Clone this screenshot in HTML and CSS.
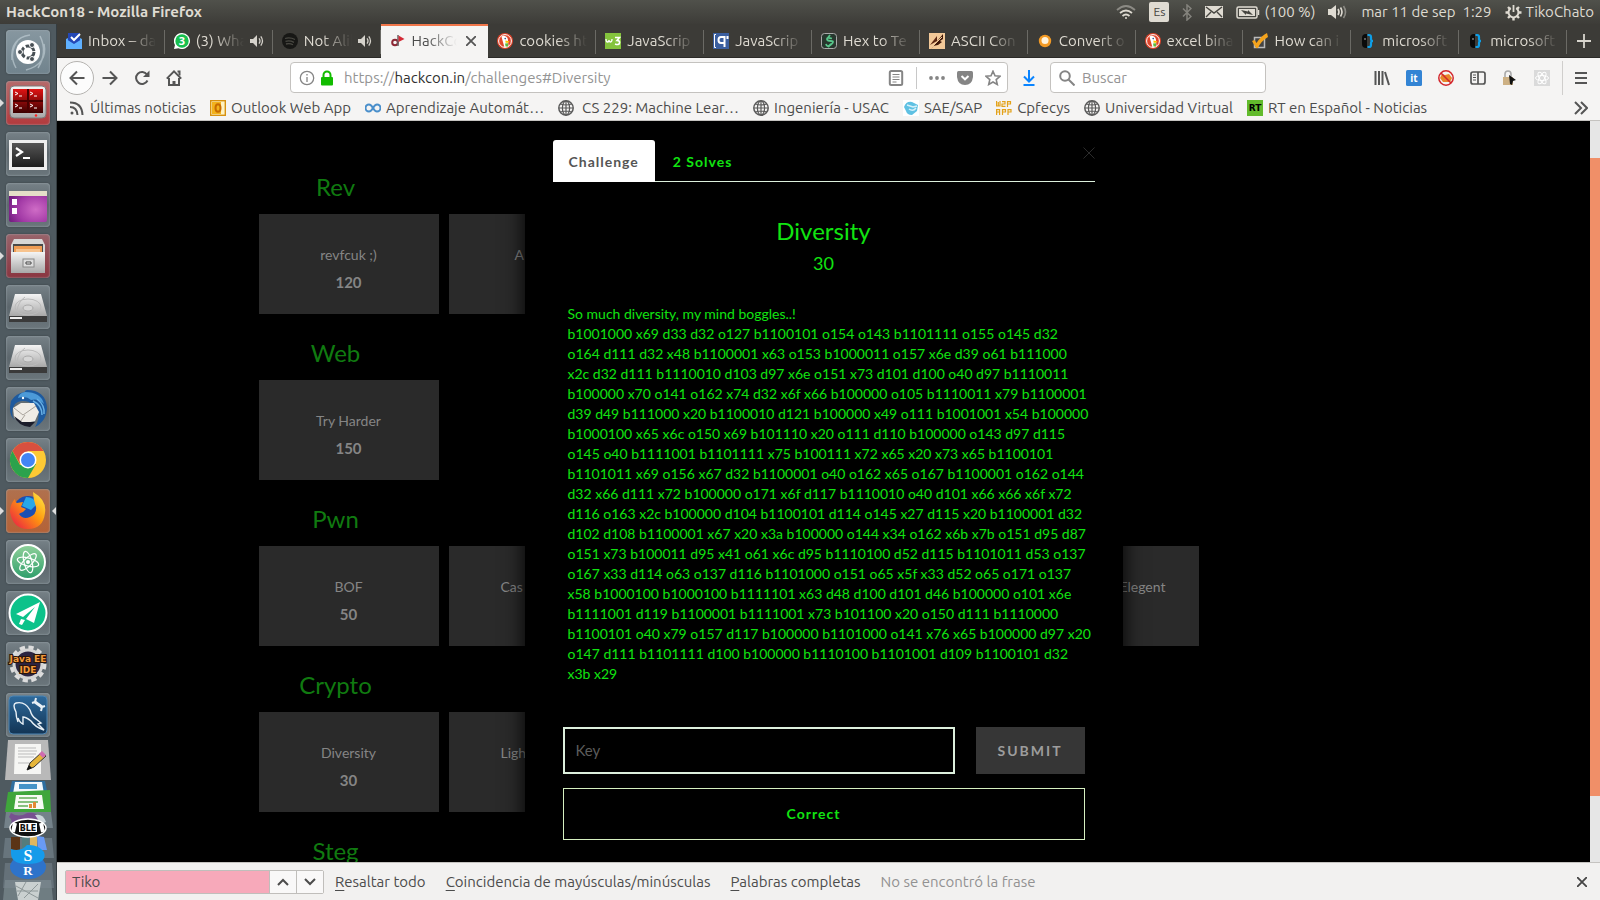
FILE: index.html
```html
<!DOCTYPE html>
<html lang="es">
<head>
<meta charset="utf-8">
<title>HackCon18 - Mozilla Firefox</title>
<link rel="stylesheet" href="styles.css">
</head>
<body>
<svg class="defs" aria-hidden="true">
  <defs>
    <linearGradient id="metal" x1="0" y1="0" x2="0" y2="1"><stop offset="0" stop-color="#f4f4f4"/><stop offset="1" stop-color="#a8a8a8"/></linearGradient>
    <radialGradient id="purple" cx=".7" cy=".6" r=".8"><stop offset="0" stop-color="#cf6cc6"/><stop offset=".6" stop-color="#a23aa6"/><stop offset="1" stop-color="#6d1a7c"/></radialGradient>
    <linearGradient id="dark" x1="0" y1="0" x2="0" y2="1"><stop offset="0" stop-color="#555"/><stop offset="1" stop-color="#1e1e1e"/></linearGradient>
    <linearGradient id="red" x1="0" y1="0" x2="0" y2="1"><stop offset="0" stop-color="#e01313"/><stop offset="1" stop-color="#3a0000"/></linearGradient>
    <linearGradient id="flame" x1="1" y1="0" x2="0" y2="1"><stop offset="0" stop-color="#fff04a"/><stop offset=".45" stop-color="#ff980e"/><stop offset="1" stop-color="#e8114b"/></linearGradient>
    <linearGradient id="green" x1="0" y1="0" x2="0" y2="1"><stop offset="0" stop-color="#8fd19a"/><stop offset="1" stop-color="#2f9e6b"/></linearGradient>
    <linearGradient id="navy" x1="0" y1="0" x2="0" y2="1"><stop offset="0" stop-color="#2e6a9c"/><stop offset="1" stop-color="#123454"/></linearGradient>
    <symbol id="globe" viewBox="0 0 16 16"><g fill="none" stroke="#5a5a5a" stroke-width="1.200"><circle cx="8" cy="8" r="7.200" stroke-width="1.500"/><ellipse cx="8" cy="8" rx="3.600" ry="7"/><path d="M8 1v14M1 8h14M2.500 4q5.500 2 11 0M2.500 12q5.500-2 11 0"/></g></symbol>
    <symbol id="duck" viewBox="0 0 16 16"><circle cx="8" cy="8" r="8" fill="#e0452b"/><circle cx="8" cy="8" r="6.400" fill="none" stroke="#fff" stroke-width="1"/><path d="M4.500 3.400c2.400-1.400 6 0 6.400 3l.6 7.200-4 1L5.400 7z" fill="#fff"/><path d="M8.400 7.600l4 .6-1 1.600H8.600z" fill="#fdc300"/><path d="M8 10.600l3-.4v3.400H8.600z" fill="#5cba3c"/><circle cx="8.200" cy="5.600" r=".8" fill="#2a4e8a"/></symbol>
    <symbol id="speaker" viewBox="0 0 14 14"><path d="M0 5h3l4-4v12L3 9H0z" fill="#d5d2cb"/><path d="M9 4.400q2 2.600 0 5.200M10.800 2.400q3.400 4.600 0 9.200" fill="none" stroke="#d5d2cb" stroke-width="1.300"/></symbol>
    <symbol id="brace" viewBox="0 0 16 16"><path d="M6 1Q2 1 2 5v6q0 4 4 4h1V1z" fill="#0a0a0a"/><circle cx="5" cy="6" r="1" fill="#777"/><path d="M7.500 2H9q2 0 2 2v2q0 2 2 2-2 0-2 2v2q0 2-2 2H7.500" fill="none" stroke="#0e9fe8" stroke-width="2.200"/></symbol>
    <symbol id="drive" viewBox="0 0 44 44"><path d="M9 9h26l6 22H3z" fill="url(#metal)"/><path d="M3 31h38v6H3z" fill="#3a3a3a"/><path d="M4 32h12v2H4z" fill="#eee"/><ellipse cx="22" cy="22" rx="13" ry="8" fill="none" stroke="#bbb"/><ellipse cx="22" cy="23" rx="5" ry="3" fill="#d6d6d6" stroke="#aaa"/><path d="M19 12q-7 5-8 14" fill="none" stroke="#bbb"/></symbol>
  </defs>
</svg>

<header class="panel">
  <span class="panel-title">HackCon18 - Mozilla Firefox</span>
  <div class="indicators">
    <svg width="20" height="16" viewBox="0 0 20 16" fill="none" stroke="#dfdbd2" stroke-width="1.800"><path d="M1 6q9-8 18 0" stroke="#8b8a84"/><path d="M4 9q6-5 12 0M6.500 12q3.500-3 7 0"/><circle cx="10" cy="14" r="1" fill="#dfdbd2" stroke="none"/></svg>
    <span class="lang">Es</span>
    <svg width="10" height="17" viewBox="0 0 10 17" fill="none" stroke="#84837d" stroke-width="1.500"><path d="M1 4.500l8 8-4 3.500V1l4 3.500-8 8"/></svg>
    <svg width="18" height="12" viewBox="0 0 18 12"><path d="M0 0h18v12H0z" fill="#dfdbd2"/><path d="M1 1l8 6 8-6M1 11l5-5M17 11l-5-5" fill="none" stroke="#45443f" stroke-width="1.400"/></svg>
    <span class="battery"><svg width="24" height="13" viewBox="0 0 24 13"><rect x="1" y="1" width="20" height="11" rx="1.500" fill="none" stroke="#dfdbd2" stroke-width="1.500"/><rect x="3" y="3" width="16" height="7" fill="#dfdbd2"/><path d="M22.500 4v5" stroke="#dfdbd2" stroke-width="1.500"/><path d="M5 4l7 1.500V4l5 5-7-1.500V9z" fill="#45443f"/></svg>(100 %)</span>
    <svg width="20" height="14" viewBox="0 0 20 14"><path d="M0 4h3l5-4v14L3 10H0z" fill="#dfdbd2"/><path d="M10 4q2 3 0 6M12.500 2.500q3 4.500 0 9" fill="none" stroke="#dfdbd2" stroke-width="1.600"/><path d="M15.500 1q4 6 0 12" fill="none" stroke="#8b8a84" stroke-width="1.600"/></svg>
    <span class="clock">mar 11 de sep&nbsp; 1:29</span>
    <span class="session"><svg width="17" height="17" viewBox="0 0 17 17" fill="none" stroke="#dfdbd2"><path d="M5.800 4.200a5 5 0 1 0 5.400 0" stroke-width="2"/><path d="M8.500 1v7" stroke-width="1.800"/><path d="M3 3l2 2M14 3l-2 2M.500 8.500h3M13.500 8.500h3M3 14l2-2M14 14l-2-2M8.500 13.500v3" stroke-width="2.400"/></svg>TikoChato</span>
  </div>
</header>

<div class="desktop">
  <nav class="dock" aria-label="Lanzador">
    <button class="tile tile-pale" aria-label="Ubuntu"><svg viewBox="0 0 44 44"><path d="M6 30Q4 8 24 5M38 14q4 20-18 26M10 38Q2 24 12 10M34 6q8 16-2 32" stroke="#c7d4da" stroke-width="1.500" fill="none" opacity=".6"/><circle cx="22" cy="22" r="12" fill="#fff"/><circle cx="22" cy="22" r="6" fill="none" stroke="#474f54" stroke-width="3" stroke-dasharray="10.600 2"/><g fill="#474f54" stroke="#fff"><circle cx="14" cy="22" r="2.500"/><circle cx="26" cy="15" r="2.500"/><circle cx="26" cy="29" r="2.500"/></g></svg></button>
    <button class="tile tile-red runs" aria-label="Terminator"><svg viewBox="0 0 44 44"><rect x="4" y="5" width="36" height="32" rx="4" fill="url(#metal)" stroke="#7a7a7a"/><rect x="7" y="8" width="30" height="24" fill="url(#red)"/><path d="M22 8v24M7 20h30" stroke="#4a0000" stroke-width="2"/><path d="M9 11l3 1.500L9 14M13 15h3M24 11l3 1.500-3 1.500M28 15h3M9 23l3 1.500L9 26M13 27h3M24 23l3 1.500-3 1.500M28 27h3" stroke="#fff" fill="none"/><circle cx="30" cy="34.500" r="1.200" fill="#f22"/></svg></button>
    <button class="tile" aria-label="Terminal"><svg viewBox="0 0 44 44"><rect x="3" y="8" width="38" height="30" fill="#eee"/><rect x="6" y="11" width="32" height="24" fill="url(#dark)"/><path d="M10 16l6 4-6 4M17 26h7" stroke="#fff" stroke-width="2.200" fill="none"/></svg></button>
    <button class="tile" aria-label="Escritorio"><svg viewBox="0 0 44 44"><rect x="3" y="8" width="38" height="31" rx="2" fill="url(#purple)"/><path d="M3 8h38v5H3z" fill="#e5dfc8"/><path d="M6 16h5v6H6zM6 25h5v6H6z" fill="#fff"/></svg></button>
    <button class="tile tile-wine runs" aria-label="Archivos"><svg viewBox="0 0 44 44"><path d="M8 5h28l3 6v9H5v-9z" fill="#d7d7d7"/><path d="M7 10h30v10H7z" fill="#4a4a4a"/><path d="M8 12h28v8H8z" fill="#ee9c55"/><path d="M10 15h24v5H10z" fill="#f7c38e"/><path d="M5 18h34v21H5z" fill="url(#metal)"/><rect x="17" y="25" width="11" height="8" fill="#ddd" stroke="#888"/><path d="M20 28h5v2h-5z" fill="#fff" stroke="#444"/></svg></button>
    <button class="tile" aria-label="Disco 1"><svg><use href="#drive"/></svg></button>
    <button class="tile" aria-label="Disco 2"><svg><use href="#drive"/></svg></button>
    <button class="tile" aria-label="Thunderbird"><svg viewBox="0 0 44 44"><path d="M5 14Q10 6 19 5q-1-1 2-2 18 0 20 17 0 14-12 20 5-8 3-16l-9-9q-9-3-14 2-5 7-1 16-6-7-3-19z" fill="#1e5a9e"/><path d="M19 5q16 0 19 12-6-6-13-4-5-5-13-2 1-5 7-6z" fill="#4c9ad8"/><path d="M27 14q9 4 9 14M31 12q8 6 7 15" stroke="#67b0e6" stroke-width="1.500" fill="none"/><path d="M7 21l8-5 13 0 5 9-4 9-14 3-7-7z" fill="#efece6"/><path d="M8 21l9 7 13-9M14 35l5-7" stroke="#a9a49c" fill="none"/><path d="M8 29l8 6 13 0-5 5q-12-1-16-11z" fill="#1b1d2b"/><circle cx="17" cy="11" r="1.200" fill="#fff"/></svg></button>
    <button class="tile" aria-label="Chrome"><svg viewBox="0 0 44 44"><circle cx="22" cy="22" r="18" fill="#fcc934"/><path d="M6.400 13A18 18 0 0 1 37.600 13H22L14 26z" fill="#d8503f"/><path d="M6.400 13A18 18 0 0 0 22 40l8-14-16 1z" fill="#2ba24c"/><circle cx="22" cy="22" r="8.500" fill="#fff"/><circle cx="22" cy="22" r="7" fill="#4285f4"/></svg></button>
    <button class="tile tile-orange runs active" aria-label="Firefox"><svg viewBox="0 0 44 44"><circle cx="22" cy="22" r="15" fill="#1b4fb4"/><path d="M20 8q8 0 11 7l-6 6-9-4z" fill="#28a7e8"/><path d="M27 3q14 8 12 21-2 16-17 16T4 23q0-8 5-13 0 3 2 4l6-1-2 5 5 2-3 3q-3 1-4 2 4 6 11 3 7-3 6-10-3-8-3-15z" fill="url(#flame)"/></svg></button>
    <button class="tile" aria-label="Atom"><svg viewBox="0 0 44 44"><circle cx="22" cy="22" r="17" fill="url(#green)" stroke="#fff" stroke-width="2"/><g fill="none" stroke="#fff" stroke-width="1.200"><ellipse cx="22" cy="22" rx="11" ry="4" transform="rotate(15 22 22)"/><ellipse cx="22" cy="22" rx="11" ry="4" transform="rotate(75 22 22)"/><ellipse cx="22" cy="22" rx="11" ry="4" transform="rotate(135 22 22)"/></g><circle cx="22" cy="22" r="2" fill="#fff"/></svg></button>
    <button class="tile" aria-label="Mensajería"><svg viewBox="0 0 44 44"><circle cx="22" cy="22" r="18.500" fill="#0cc28a" stroke="#fff" stroke-width="2"/><path d="M34 11L10 23l7 3 12-10-9 12 8 4zM15 28l4 1-3 5-3-1z" fill="#fff"/></svg></button>
    <button class="tile" aria-label="Java EE IDE"><svg viewBox="0 0 44 44"><circle cx="22" cy="22" r="16" fill="none" stroke="#ddd" stroke-width="5" stroke-dasharray="5 3.370"/><circle cx="22" cy="22" r="14" fill="#2c2440" stroke="#d5d5d5" stroke-width="3"/><text x="22" y="20" class="java">Java EE</text><text x="22" y="31" class="java">IDE</text></svg></button>
    <button class="tile" aria-label="MySQL Workbench"><svg viewBox="0 0 44 44"><rect x="3" y="3" width="38" height="38" rx="4" fill="url(#navy)" stroke="#4d86b5"/><path d="M12 29q-2-5-2-10-4-8 0-9 9-2 14 7 2 7 6 9l5 4-3 1 6 6q-9-3-13-9-5-4-8-4l0 7q-3-1-5-6" fill="none" stroke="#e8f0f6" stroke-width="1.400"/><path d="M29 9l7 5" stroke="#e8f0f6" stroke-width="3"/><path d="M30 5l-1 4-3 1M35 18l1-4 3-1" stroke="#e8f0f6" stroke-width="2" fill="none"/></svg></button>
    <div class="pile"><svg viewBox="0 0 57 160" aria-label="Más aplicaciones">
      <path d="M8 0h40l3 40H5z" fill="#b9b9b9"/><path d="M15 4h26v30H14z" fill="#f6f6f4"/><path d="M18 8h18M18 11h19M18 14h18M18 17h16M18 23h12" stroke="#bbb"/><path d="M27 30l3-7 12-11 4 4-12 11z" fill="#e6b53a" stroke="#333"/><path d="M39 14l3-3 4 4-3 3z" fill="#cf6bb0"/><path d="M27 30l2-5 3 3z" fill="#111"/>
      <path d="M12 41h33l3 15H9z" fill="#2f6e9f"/><path d="M15 42h27l2 12H13z" fill="#f2f7fb"/><path d="M19 44h18v5H19z" fill="#4593c8"/>
      <path d="M8 52l42-2 1 22H5z" fill="#3fa63b"/><path d="M16 55h26l2 14H14z" fill="#f7faf4"/><path d="M19 58h18M18 62h20M18 66h10" stroke="#87c07f" stroke-width="2"/><path d="M29 68v-4h3v4m1 0v-6h3v6" fill="#e28a35"/>
      <path d="M6 72h45l2 16H4z" fill="#74828a"/><path d="M11 73q8 5 16 0 10-1 13 5l-3 8H10q4-5-1-9z" fill="#775090"/><path d="M35 75q8-2 11 7l-5 2z" fill="#cbd5da"/>
      <path d="M5 98h47l2 20H3z" fill="#68757d"/><path d="M11 97h9v14h-9z" fill="#5b3416"/><path d="M22 96h7v12h-7z" fill="#557c7d"/><path d="M30 97h7v14h-7z" fill="#dfb75f"/><path d="M37 96l7 1 3 13h-9z" fill="#699af5"/>
      <ellipse cx="28" cy="88" rx="18" ry="9" fill="#111" stroke="#fff" stroke-width="1.500"/><path d="M15 83l-2 9M41 83l2 9" stroke="#fff" stroke-width="4"/><rect x="19" y="83" width="18" height="9" fill="#fff"/><text x="28" y="91" class="ble">BLE</text>
      <path d="M5 123h47l2 25H3z" fill="#657179"/><ellipse cx="28" cy="127" rx="18" ry="12" fill="#2e73ca"/><text x="28" y="135" class="pile-letter pile-small">R</text><path d="M11 109q10 3 16-4 11-1 17 7 4 12-17 12-16 0-16-11z" fill="#159bea"/><text x="28" y="121" class="pile-letter">S</text>
      <path d="M5 140h46l2 20H3z" fill="#7d8b92" opacity=".7"/><path d="M15 142h26l-3 18H18z" fill="#c9d0d0"/><path d="M16 146l22 12M26 142l-8 14M38 144l-14 14M17 151h21" stroke="#8e9899"/>
    </svg></div>
  </nav>

  <div class="browser">
    <div class="tabs" role="tablist">
      <button class="tab" role="tab"><svg viewBox="0 0 16 16"><path d="M0 6l8-4 8 4v9H0z" fill="#5aa7f8"/><path d="M2 0h12v8l-6 4-6-4z" fill="#2447b5"/><path d="M5 4l3 3 6-6" stroke="#fff" stroke-width="2" fill="none"/><path d="M0 6l8 5 8-5v10H0z" fill="#5fb0ff"/></svg><span class="tab-label">Inbox – da</span></button>
      <button class="tab" role="tab"><svg viewBox="0 0 16 16"><path d="M8 0a8 8 0 1 1-3.500 15.200L0 16l1-4A8 8 0 0 1 8 0z" fill="#fff"/><circle cx="8" cy="8" r="6.700" fill="#17bf4f"/><text x="8" y="12" class="wa">3</text></svg><span class="tab-label">(3) Wha</span><svg class="audio"><use href="#speaker"/></svg></button>
      <button class="tab" role="tab"><svg viewBox="0 0 16 16"><circle cx="8" cy="8" r="8" fill="#171715"/><path d="M3 5.500q5-1.500 10 1M3.500 8.300q4.500-1 8.500 1M4 11q4-1 7 .8" stroke="#4a4943" stroke-width="1.300" fill="none"/></svg><span class="tab-label">Not Alik</span><svg class="audio"><use href="#speaker"/></svg></button>
      <button class="tab current" role="tab" aria-selected="true"><svg viewBox="0 0 16 16"><circle cx="5" cy="9.500" r="2.800" fill="none" stroke="#8c2734" stroke-width="2"/><path d="M8 2v11" stroke="#666" stroke-width="1.500"/><path d="M8.500 2.500l6 3.500-6 3z" fill="#d42a36"/></svg><span class="tab-label">HackCo</span><svg class="close" viewBox="0 0 10 10"><path d="M0 0l10 10M10 0L0 10" stroke="#555" stroke-width="1.800"/></svg></button>
      <button class="tab" role="tab"><svg><use href="#duck"/></svg><span class="tab-label">cookies ht</span></button>
      <button class="tab" role="tab"><svg viewBox="0 0 16 16"><path d="M0 0h16v16H0z" fill="#84c33d"/><path d="M1 6q0 3 1.500 3T4 7q0 2 1.500 2T7 6" stroke="#fff" fill="none" stroke-width="1.300"/><path d="M10 4.500h4.500L12 7.500q3 0 2.500 2.500T10 11" stroke="#fff" stroke-width="1.600" fill="none"/></svg><span class="tab-label">JavaScrip</span></button>
      <button class="tab" role="tab"><svg viewBox="0 0 16 16"><path d="M0 0h16v16H0z" fill="#3b5fa0"/><path d="M3 1.500H1.500v13H3" stroke="#fff" fill="none"/><path d="M11.500 4H8q-2.500 0-2.500 3t2.500 3h3.500M11.500 3v11M14.500 3v3" stroke="#fff" stroke-width="2" fill="none"/></svg><span class="tab-label">JavaScrip</span></button>
      <button class="tab" role="tab"><svg viewBox="0 0 16 16"><rect x=".5" y=".5" width="15" height="15" rx="3" fill="#27372e" stroke="#aaa"/><path d="M11 5.500Q6 4 6 6t4 2 0 3.500-5-.5M6 6l3-4M10 11l-3 3" stroke="#58c68a" stroke-width="1.800" fill="none"/></svg><span class="tab-label">Hex to Te</span></button>
      <button class="tab" role="tab"><svg viewBox="0 0 16 16"><path d="M0 0h16v16H0z" fill="#f3c998"/><path d="M2 16L14 1v5l-3 2 2 1-4 3-5 1z" fill="#3f1708"/><path d="M1 12L8 3v5z" fill="#5b2612"/><path d="M2 15L13 4" stroke="#f3c998"/></svg><span class="tab-label">ASCII Con</span></button>
      <button class="tab" role="tab"><svg viewBox="0 0 16 16"><circle cx="8" cy="8" r="6.200" fill="#f39a25"/><circle cx="8" cy="7.500" r="3.500" fill="#fff3dd"/></svg><span class="tab-label">Convert o</span></button>
      <button class="tab" role="tab"><svg><use href="#duck"/></svg><span class="tab-label">excel bina</span></button>
      <button class="tab" role="tab"><svg viewBox="0 0 16 16"><rect x="2.500" y="4.500" width="10" height="10" fill="#444" stroke="#bbb" stroke-width="1.500"/><path d="M0 8l2.500-1 2 3Q9 3 15 0l1 4Q9 8 6 15H4z" fill="#f4a31c"/></svg><span class="tab-label">How can i</span></button>
      <button class="tab" role="tab"><svg><use href="#brace"/></svg><span class="tab-label">microsoft</span></button>
      <button class="tab" role="tab"><svg><use href="#brace"/></svg><span class="tab-label">microsoft</span></button>
      <button class="new-tab" aria-label="Nueva pestaña"><svg width="14" height="14" viewBox="0 0 14 14"><path d="M7 0v14M0 7h14" stroke="#d8d5cd" stroke-width="1.800"/></svg></button>
    </div>

    <div class="toolbar">
      <button class="back" aria-label="Atrás"><svg viewBox="0 0 16 16"><path d="M15.500 8H1.500M8 1.500L1.500 8 8 14.500"/></svg></button>
      <button class="tool" aria-label="Adelante"><svg viewBox="0 0 16 16"><path d="M.500 8h14M8 1.500L14.500 8 8 14.500"/></svg></button>
      <button class="tool" aria-label="Recargar"><svg viewBox="0 0 16 16"><path d="M13.500 10.500A6 6 0 1 1 13 4.500"/><path d="M15.500.5v6.500H9z" fill="#555" stroke="none"/></svg></button>
      <button class="tool" aria-label="Inicio"><svg viewBox="0 0 16 16"><path d="M.8 8.600L8 1.400l7.200 7.200M3 8v7h10V8"/><path d="M8 15v-4" stroke-width="3"/><path d="M11.500 1.500h2v4"/></svg></button>
      <div class="address">
        <svg viewBox="0 0 16 16"><g stroke-width="1.300"><circle cx="8" cy="8" r="6.700"/><path d="M8 7v5M8 4v1.500"/></g></svg>
        <svg viewBox="0 0 16 16"><path d="M4.500 8V5a3.500 3.500 0 0 1 7 0v3" stroke="#12bc00" stroke-width="2"/><rect x="2" y="7" width="12" height="8.500" rx="1" fill="#12bc00" stroke="none"/></svg>
        <div class="url" role="textbox" aria-label="Dirección" contenteditable="true">https://<b>hackcon.in</b>/challenges#Diversity</div>
        <svg class="grey" viewBox="0 0 16 16"><rect x="1.800" y="1" width="12.400" height="14" rx="1.500"/><path d="M4.500 4.500h7M4.500 7h7M4.500 9.500h7M4.500 12h4" stroke-width="1.200"/></svg>
        <i class="rule"></i>
        <svg class="grey" viewBox="0 0 16 16"><g fill="#858585" stroke="none"><circle cx="2" cy="8" r="1.900"/><circle cx="8" cy="8" r="1.900"/><circle cx="14" cy="8" r="1.900"/></g></svg>
        <svg viewBox="0 0 16 16"><path d="M0 2.500Q0 1 1.500 1h13Q16 1 16 2.500V7q-1 8-8 8T0 7z" fill="#858585" stroke="none"/><path d="M4.500 6L8 9.300 11.500 6" stroke="#fff" stroke-width="2"/></svg>
        <svg class="grey" viewBox="0 0 16 16"><path d="M8 1.200l2 4.600 5 .5-3.800 3.300 1.100 4.900L8 12l-4.300 2.500 1.100-4.900L1 6.300l5-.5z" stroke-width="1.600"/></svg>
      </div>
      <button class="tool download" aria-label="Descargas"><svg viewBox="0 0 16 16"><path d="M8 0v11M3 6.500l5 5 5-5M2.500 15h11" stroke="#0a84ff"/></svg></button>
      <div class="search"><svg class="grey" viewBox="0 0 16 16"><circle cx="6" cy="6" r="4.800"/><path d="M9.500 9.500l6 6"/></svg><input type="text" placeholder="Buscar" aria-label="Buscar"></div>
      <div class="extras">
        <button class="tool" aria-label="Catálogo"><svg viewBox="0 0 16 16"><path d="M1.500 1v14M5 1v14M8.500 1v14M11 2l4 13"/></svg></button>
        <button class="tool" aria-label="it"><svg viewBox="0 0 16 16"><rect width="16" height="16" rx="1.500" fill="#3384d4" stroke="none"/><text x="8" y="12" class="it">it</text></svg></button>
        <button class="tool" aria-label="Bloqueador"><svg viewBox="0 0 16 16"><path d="M2 8l2-4 3 1 4-1 3 4-2 4H5z" fill="#e8862b" stroke="none"/><circle cx="8" cy="8" r="7.200" stroke="#d3262c" stroke-width="1.500"/><path d="M3 3l10 10" stroke="#d3262c" stroke-width="1.500"/></svg></button>
        <button class="tool" aria-label="Barra lateral"><svg viewBox="0 0 16 16"><rect x="1" y="2" width="14" height="12" rx="2" stroke-width="1.700"/><path d="M8 2v12" stroke-width="1.700"/><path d="M3 5h3M3 7.500h3M3 10h3" stroke-width="1"/></svg></button>
        <button class="tool" aria-label="Candado"><svg viewBox="0 0 16 16"><path d="M3 7V4a3 3 0 0 1 6 0v3" stroke="#aaa" stroke-width="1.600"/><rect x="1" y="7" width="10" height="8" fill="#cdb083" stroke="none"/><path d="M7 5l7 5-3 1-1 4-2-1z" fill="#111" stroke="none"/></svg></button>
        <button class="tool" aria-label="React"><svg viewBox="0 0 16 16"><rect width="16" height="16" fill="#dadada" stroke="none"/><g stroke="#fff" stroke-width="1"><ellipse cx="8" cy="8" rx="6.500" ry="2.500"/><ellipse cx="8" cy="8" rx="6.500" ry="2.500" transform="rotate(60 8 8)"/><ellipse cx="8" cy="8" rx="6.500" ry="2.500" transform="rotate(120 8 8)"/></g></svg></button>
      </div>
      <button class="menu" aria-label="Menú"><svg viewBox="0 0 16 16"><path d="M2 3h12M2 8h12M2 13h12"/></svg></button>
    </div>

    <nav class="bookmarks" aria-label="Marcadores">
      <a href="#"><svg viewBox="0 0 16 16" fill="none" stroke="#555" stroke-width="2"><circle cx="3" cy="13" r="1.500" fill="#555" stroke="none"/><path d="M1 7q7 0 7.500 8M1 2.500q12 0 12.500 12.500"/></svg>Últimas noticias</a>
      <a href="#"><svg viewBox="0 0 16 16"><rect x=".7" y=".7" width="14.600" height="14.600" fill="#fff3c4" stroke="#d79110" stroke-width="1.400"/><path d="M2 2h9v12H2z" fill="#f2b21c"/><ellipse cx="8" cy="8" rx="2.500" ry="3.800" fill="none" stroke="#c86c00" stroke-width="2"/></svg>Outlook Web App</a>
      <a href="#"><svg viewBox="0 0 16 16"><path d="M8 8Q6 4.500 4 4.500a3.500 3.500 0 0 0 0 7Q6 11.500 8 8t4-3.500a3.500 3.500 0 0 1 0 7Q10 11.500 8 8z" fill="none" stroke="#4a8fcb" stroke-width="2"/></svg>Aprendizaje Automát…</a>
      <a href="#" class="spaced"><svg><use href="#globe"/></svg>CS 229: Machine Lear…</a>
      <a href="#"><svg><use href="#globe"/></svg>Ingeniería - USAC</a>
      <a href="#"><svg viewBox="0 0 16 16"><path d="M0 0h16v16H0z" fill="#fff"/><path d="M1 7q2-6 8-5l6 3-1 6-5 4q-5 0-6-4z" fill="#5fc1e3"/><path d="M4 5l6 2 4-1M6 9q4 3 7-1" stroke="#d6f1fa" stroke-width="1.500" fill="none"/></svg>SAE/SAP</a>
      <a href="#"><svg viewBox="0 0 16 16" fill="none" stroke="#e3a21a" stroke-width="1.200"><path d="M.6 1v5h1.700V2v4H4V1M6 1.600h3V4H6v2.400h3.500M11.500 7V1.600h3V4h-3M.6 15V9.600h3V15M.6 12h3M6.500 15V9.600h3V12h-3M12 15V9.600h3V12h-3"/></svg>Cpfecys</a>
      <a href="#"><svg><use href="#globe"/></svg>Universidad Virtual</a>
      <a href="#"><svg viewBox="0 0 16 16"><path d="M0 0h16v16H0z" fill="#62bb2c"/><text x="8" y="11" class="rt">RT</text></svg>RT en Español - Noticias</a>
      <button class="overflow" aria-label="Más marcadores"><svg viewBox="0 0 14 14"><path d="M1 1l6 6-6 6M7 1l6 6-6 6" fill="none" stroke="#555" stroke-width="2"/></svg></button>
    </nav>

    <div class="viewport">
      <main class="page">
        <div class="board">
          <section class="category"><h3>Rev</h3><div class="cards">
            <button class="card"><span>revfcuk ;)</span><b>120</b></button>
            <button class="card cut cut-short"><span>A</span></button>
          </div></section>
          <section class="category"><h3>Web</h3><div class="cards">
            <button class="card"><span>Try Harder</span><b>150</b></button>
          </div></section>
          <section class="category"><h3>Pwn</h3><div class="cards">
            <button class="card"><span>BOF</span><b>50</b></button>
            <button class="card cut"><span>Cas</span></button>
            <button class="card end"><span>Elegent</span></button>
          </div></section>
          <section class="category"><h3>Crypto</h3><div class="cards">
            <button class="card"><span>Diversity</span><b>30</b></button>
            <button class="card cut"><span>Ligh</span></button>
          </div></section>
          <section class="category"><h3>Steg</h3></section>
        </div>
        <div class="overlay">
          <div class="modal" role="dialog" aria-labelledby="challenge-name">
            <button class="dismiss" aria-label="Cerrar"><svg viewBox="0 0 12 12"><path d="M.5.5l11 11M11.500.5l-11 11" stroke="#2c2c2c"/></svg></button>
            <div class="modal-tabs">
              <a href="#challenge" class="on">Challenge</a>
              <a href="#solves">2 Solves</a>
            </div>
            <h2 id="challenge-name">Diversity</h2>
            <p class="points">30</p>
            <p class="cipher">So much diversity, my mind boggles..!
b1001000 x69 d33 d32 o127 b1100101 o154 o143 b1101111 o155 o145 d32
o164 d111 d32 x48 b1100001 x63 o153 b1000011 o157 x6e d39 o61 b111000
x2c d32 d111 b1110010 d103 d97 x6e o151 x73 d101 d100 o40 d97 b1110011
b100000 x70 o141 o162 x74 d32 x6f x66 b100000 o105 b1110011 x79 b1100001
d39 d49 b111000 x20 b1100010 d121 b100000 x49 o111 b1001001 x54 b100000
b1000100 x65 x6c o150 x69 b101110 x20 o111 d110 b100000 o143 d97 d115
o145 o40 b1111001 b1101111 x75 b100111 x72 x65 x20 x73 x65 b1100101
b1101011 x69 o156 x67 d32 b1100001 o40 o162 x65 o167 b1100001 o162 o144
d32 x66 d111 x72 b100000 o171 x6f d117 b1110010 o40 d101 x66 x66 x6f x72
d116 o163 x2c b100000 d104 b1100101 d114 o145 x27 d115 x20 b1100001 d32
d102 d108 b1100001 x67 x20 x3a b100000 o144 x34 o162 x6b x7b o151 d95 d87
o151 x73 b100011 d95 x41 o61 x6c d95 b1110100 d52 d115 b1101011 d53 o137
o167 x33 d114 o63 o137 d116 b1101000 o151 o65 x5f x33 d52 o65 o171 o137
x58 b1000100 b1000100 b1111101 x63 d48 d100 d101 d46 b100000 o101 x6e
b1111001 d119 b1100001 b1111001 x73 b101100 x20 o150 d111 b1110000
b1100101 o40 x79 o157 d117 b100000 b1101000 o141 x76 x65 b100000 d97 x20
o147 d111 b1101111 d100 b100000 b1110100 b1101001 d109 b1100101 d32
x3b x29</p>
            <form class="answer">
              <input type="text" placeholder="Key" aria-label="Key">
              <button type="button">SUBMIT</button>
            </form>
            <div class="result" role="status">Correct</div>
          </div>
        </div>
      </main>
      <div class="scrollbar"><div class="thumb"></div></div>
    </div>

    <div class="findbar">
      <div class="find-group">
        <input type="text" value="Tiko" aria-label="Buscar en la página">
        <button aria-label="Anterior"><svg viewBox="0 0 12 8"><path d="M1 7l5-5 5 5"/></svg></button>
        <button aria-label="Siguiente"><svg viewBox="0 0 12 8"><path d="M1 1l5 5 5-5"/></svg></button>
      </div>
      <button class="option"><u>R</u>esaltar todo</button>
      <button class="option"><u>C</u>oincidencia de mayúsculas/minúsculas</button>
      <button class="option"><u>P</u>alabras completas</button>
      <span class="not-found">No se encontró la frase</span>
      <button class="find-close" aria-label="Cerrar barra"><svg viewBox="0 0 10 10"><path d="M0 0l10 10M10 0L0 10" stroke="#444" stroke-width="1.800"/></svg></button>
    </div>
  </div>
</div>
</body>
</html>
```
FILE: styles.css
```css
* { box-sizing: border-box; }
body {
  margin: 0;
  height: 100vh;
  display: flex;
  flex-direction: column;
  overflow: hidden;
  background: #000;
  font: 15px/20px Ubuntu, "Open Sans", sans-serif;
  color: #4c4c4c;
}
button, input { font: inherit; color: inherit; }
button { background: none; border: 0; padding: 0; margin: 0; }
a { color: inherit; text-decoration: none; }
svg { display: block; flex: none; }
.defs { width: 0; height: 0; position: absolute; }

/* top panel */
.panel {
  flex: none;
  height: 24px;
  display: flex;
  align-items: center;
  justify-content: space-between;
  padding: 0 6px;
  background: linear-gradient(#50514b, #3d3c38);
  color: #dfdbd2;
}
.panel-title { font-weight: bold; }
.indicators { display: flex; align-items: center; gap: 13px; }
.lang {
  width: 20px;
  height: 20px;
  border-radius: 2px;
  background: #dfdbd2;
  color: #45443f;
  font-size: 12px;
  text-align: center;
}
.battery, .session { display: flex; align-items: center; gap: 4px; }

.desktop { flex: 1; min-height: 0; display: flex; }

/* launcher */
.dock {
  flex: none;
  width: 57px;
  padding-top: 6px;
  display: flex;
  flex-direction: column;
  align-items: center;
  gap: 7px;
  overflow: hidden;
  background: #4f5a60;
  border-right: 1px solid #343c40;
}
.tile {
  position: relative;
  flex: none;
  width: 44px;
  height: 44px;
  border-radius: 4px;
  background: linear-gradient(#768187, #5c666c 50%, #6b767c);
  box-shadow: inset 0 0 2px #a5b0b5, 0 0 2px #363d41;
}
.tile svg { width: 44px; height: 44px; }
.tile-pale { background: linear-gradient(#8797a0, #71838d); }
.tile-red { background: linear-gradient(#b56a6a, #b33a3d); }
.tile-wine { background: linear-gradient(#98646b, #8a3540); }
.tile-orange { background: linear-gradient(#b0714e, #b46237); }
.runs::before, .active::after {
  content: "";
  position: absolute;
  top: 18px;
  border: 4px solid transparent;
}
.runs::before { left: -6px; border-left-color: #ddd; border-right: 0; }
.active::after { right: -6px; border-right-color: #ddd; border-left: 0; }
.java { font: bold 9px "DejaVu Sans", sans-serif; fill: #f29a3b; stroke: #2a1408; stroke-width: 2px; paint-order: stroke; text-anchor: middle; }
.pile { width: 57px; height: 160px; flex: none; margin-top: -4px; }
.pile svg { width: 57px; height: 160px; }
.ble { font: bold 8px "DejaVu Sans", sans-serif; text-anchor: middle; fill: #111; }
.pile-letter { font: bold 16px "Liberation Serif", serif; fill: #fff; text-anchor: middle; }
.pile-small { font-size: 13px; }

.browser { flex: 1; min-width: 0; display: flex; flex-direction: column; background: #f2f1f0; }

/* tab strip */
.tabs { flex: none; height: 34px; display: flex; background: #3c3b37; border-bottom: 1px solid #2b2a27; color: #dfdbd2; }
.tab {
  position: relative;
  flex: 1;
  min-width: 0;
  display: flex;
  align-items: center;
  gap: 6px;
  padding: 0 9px;
  text-align: left;
}
.tab svg { width: 16px; height: 16px; }
.tab svg.audio { width: 14px; height: 14px; }
.tab svg.close { width: 10px; height: 10px; margin: 0 3px; }
.tab::after { content: ""; position: absolute; right: 0; top: 6px; bottom: 3px; width: 1px; background: #6b6a65; }
.tab-label {
  flex: 1;
  min-width: 0;
  overflow: hidden;
  white-space: nowrap;
  -webkit-mask-image: linear-gradient(to left, transparent, #000 30px);
  mask-image: linear-gradient(to left, transparent, #000 30px);
}
.current { background: #f5f4f3; color: #4c4c4c; border-top: 2px solid #f0764a; margin-bottom: -1px; padding-bottom: 2px; }
.current::after { display: none; }
.new-tab { width: 33px; display: flex; align-items: center; justify-content: center; }

/* navigation toolbar */
.toolbar { flex: none; height: 39px; display: flex; align-items: center; padding: 0 11px 0 3px; background: #f5f4f3; }
.toolbar svg { width: 16px; height: 16px; fill: none; stroke: #555; stroke-width: 2; }
.toolbar svg.grey { stroke: #858585; }
.back { width: 34px; height: 34px; border: 1px solid #b5b3b0; border-radius: 50%; background: #fcfcfc; display: flex; align-items: center; justify-content: center; }
.tool { width: 32px; height: 32px; display: flex; align-items: center; justify-content: center; }
.address {
  flex: 1;
  height: 31px;
  margin-left: 100px;
  padding: 0 6px 0 8px;
  display: flex;
  align-items: center;
  gap: 12px;
  background: #fff;
  border: 1px solid #c4c2bf;
  border-radius: 4px;
}
.address svg:first-child { margin-right: -8px; stroke: #858585; }
.url { flex: 1; margin-left: -3px; color: #949494; white-space: nowrap; }
.url b { font-weight: normal; color: #303030; }
.rule { width: 1px; height: 22px; background: #c8c8c8; }
.download { width: 42px; }
.search { width: 216px; height: 31px; padding: 0 8px; display: flex; align-items: center; gap: 7px; background: #fff; border: 1px solid #c4c2bf; border-radius: 4px; }
.search input { flex: 1; min-width: 0; border: 0; padding: 0; outline: 0; background: none; }
.search input::placeholder { color: #949494; opacity: 1; }
.extras { margin-left: 100px; display: flex; }
.menu { margin-left: 4px; height: 34px; padding-left: 10px; border-left: 1px solid #d0cecc; }
.it { font: bold 10px "Open Sans", sans-serif; fill: #fff; stroke: none; text-anchor: middle; }
.wa { font: bold 11px "Open Sans", sans-serif; fill: #fff; text-anchor: middle; }

/* bookmarks */
.bookmarks { flex: none; height: 24px; display: flex; align-items: center; gap: 14px; padding: 0 12px 2px; background: #f5f4f3; border-bottom: 1px solid #c5c3c0; white-space: nowrap; }
.bookmarks a { display: flex; align-items: center; gap: 5px; }
.bookmarks a.spaced { gap: 8px; }
.bookmarks a svg { width: 16px; height: 16px; }
.overflow { margin-left: auto; }
.overflow svg { width: 14px; height: 14px; }
.rt { font: bold 9px "DejaVu Sans", sans-serif; text-anchor: middle; fill: #000; }

/* web page */
.viewport { flex: 1; min-height: 0; display: flex; }
.page { position: relative; flex: 1; overflow: hidden; background: #000; font-family: Lato, sans-serif; font-size: 14px; }
.board { max-width: 1130px; margin: 0 auto; padding-top: 27px; }
.category { height: 166px; }
.category h3 { width: 154px; margin: 0; padding: 24px 0 12px; font-size: 24px; line-height: 30px; font-weight: normal; text-align: center; color: #107a10; }
.cards { display: flex; gap: 10px; }
.card { width: 180px; height: 100px; background: #2a2a2a; color: #858585; display: flex; flex-direction: column; align-items: center; gap: 7px; padding-top: 31px; }
.card b { font-size: 15px; }
.card.cut { align-items: flex-start; padding-left: 52px; }
.card.cut-short { padding-left: 66px; }
.card.end { align-items: flex-end; padding-right: 33px; margin-left: 380px; }
.overlay { position: absolute; inset: 0; display: flex; justify-content: center; }
.modal { position: relative; width: 598px; padding: 19px 28px; background: #000; box-shadow: 0 0 20px #000; color: #11e411; }
.dismiss { position: absolute; top: 26px; right: 28px; }
.dismiss svg { width: 12px; height: 12px; }
.modal-tabs { display: flex; gap: 2px; border-bottom: 1px solid #dcefdc; font-weight: bold; letter-spacing: 1px; }
.modal-tabs a { height: 41px; padding: 12px 16px; border-radius: 3px 3px 0 0; }
.modal-tabs .on { background: #fff; color: #555; margin-bottom: -1px; height: 42px; }
.modal h2 { margin: 31px 0 0; font-size: 24px; line-height: 36px; font-weight: normal; text-align: center; }
.points { margin: 0; font-size: 18px; line-height: 28px; text-align: center; }
.cipher { margin: 27px 0 0; padding: 0 0 0 15px; white-space: pre; line-height: 20px; }
.answer { margin: 43px 10px 0; display: flex; gap: 21px; }
.answer input { flex: 1; min-width: 0; height: 47px; padding: 0 11px 2px; background: #000; border: 2px solid #dcefdc; border-radius: 0; outline: 0; color: #11e411; font-size: 15px; }
.answer input::placeholder { color: #5c5c5c; opacity: 1; }
.answer button { width: 109px; background: #363636; color: #9d9d9d; font-weight: bold; letter-spacing: 2px; }
.result { margin: 14px 10px 0; height: 52px; padding-right: 20px; border: 1px solid #d5efc0; text-align: center; line-height: 50px; font-weight: bold; letter-spacing: 1px; }
.scrollbar { flex: none; width: 10px; padding-top: 37px; background: #e6e6e6; }
.thumb { height: 638px; background: #f08f68; }

/* find bar */
.findbar { flex: none; height: 38px; display: flex; align-items: center; gap: 20px; padding: 0 13px 0 8px; background: #f2f1f0; border-top: 1px solid #c5c3c0; }
.find-group { display: flex; width: 259px; height: 24px; margin-right: -9px; border: 1px solid #c0bebb; border-radius: 2px; }
.find-group input { flex: 1; min-width: 0; border: 0; padding: 0 6px; outline: 0; background: #f7a9ba; }
.find-group button { width: 27px; border-left: 1px solid #c0bebb; background: #f9f8f8; display: flex; align-items: center; justify-content: center; }
.find-group svg { width: 12px; height: 8px; fill: none; stroke: #4c4c4c; stroke-width: 2; }
.option { white-space: nowrap; }
.option u { text-underline-offset: 3px; }
.not-found { color: #929292; }
.find-close { margin-left: auto; }
.find-close svg { width: 10px; height: 10px; }
```
